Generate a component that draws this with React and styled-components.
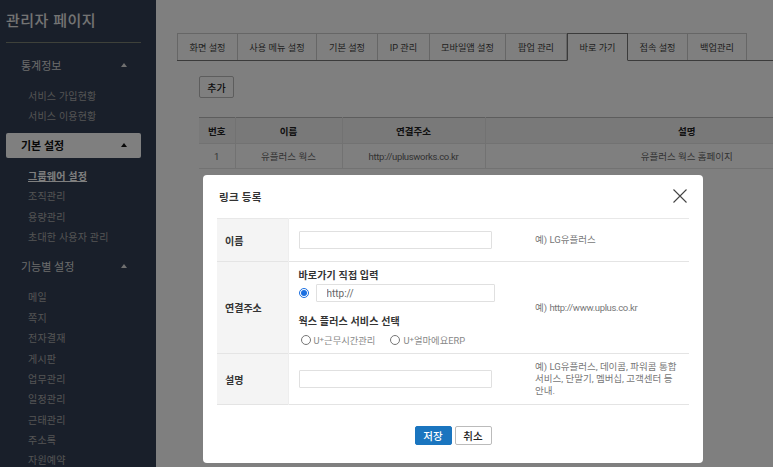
import React from 'react';
import styled, {createGlobalStyle} from 'styled-components';

const FONT = `Roboto, "Noto Sans CJK KR", "Noto Sans", "Liberation Sans", sans-serif`;

const tabs = ['화면 설정', '사용 메뉴 설정', '기본 설정', 'IP 관리', '모바일앱 설정', '팝업 관리', '바로 가기', '접속 설정', '백업관리'];
const tabWidths = [61, 79, 61, 52, 76, 61, 61, 60, 59];

const GlobalStyle = createGlobalStyle`
  html, body {
    margin: 0;
    padding: 0;
    height: 100%;
    overflow: hidden;
    font-family: ${FONT};
    background: #fff;
  }
  * {
    box-sizing: border-box;
  }
`;

const Page = styled.div`
  display: flex;
  width: 773px;
  height: 467px;
  overflow: hidden;
`;

const Sidebar = styled.aside`
  flex: 0 0 156px;
  height: 467px;
  overflow: hidden;
  padding: 10px 15px 0 6px;
  background: #333f55;
`;

const Logo = styled.h1`
  margin: 0 0 9px;
  height: 33px;
  border-bottom: 1px solid #7d8375;
  font-size: 15px;
  line-height: 23px;
  font-weight: 500;
  letter-spacing: 0.5px;
  color: #e8e8e8;
`;

const GroupHeader = styled.div`
  display: flex;
  align-items: center;
  justify-content: space-between;
  height: 25px;
  padding: 0 14px 0 15px;
  border-radius: 2px;
  font-size: 11px;
  font-weight: ${props => (props.$active ? 700 : 400)};
  color: ${props => (props.$active ? '#111' : '#d8d8d8')};
  background: ${props => (props.$active ? '#fff' : 'transparent')};
`;

const Caret = styled.span`
  width: 0;
  height: 0;
  border-left: 3.5px solid transparent;
  border-right: 3.5px solid transparent;
  border-bottom: 4px solid ${props => (props.$active ? '#111' : '#e0e0e0')};
`;

const SubList = styled.ul`
  list-style: none;
  margin: 0;
  padding: ${props => props.$top}px 0 ${props => props.$bottom}px 22px;
`;

const SubItem = styled.li`
  height: 20.4px;
  font-size: 10px;
  line-height: 20.4px;
  white-space: nowrap;
  letter-spacing: 0.2px;
  color: ${props => (props.$current ? '#fff' : '#a8a8a8')};
  font-weight: ${props => (props.$current ? 700 : 400)};
  text-decoration: ${props => (props.$current ? 'underline' : 'none')};
`;

const Main = styled.main`
  flex: 1;
  min-width: 0;
  padding: 33px 0 0 21px;
  overflow: hidden;
`;

const TabBar = styled.div`
  display: flex;
  height: 28px;
  border-bottom: 1px solid #777;
`;

const Tab = styled.div`
  display: flex;
  align-items: center;
  justify-content: center;
  height: ${props => (props.$active ? 28 : 27)}px;
  border: 1px solid ${props => (props.$active ? '#777' : '#ccc')};
  border-bottom: ${props => (props.$active ? '1px solid #fff' : '0')};
  border-left-width: ${props => (props.$first || props.$active ? 1 : 0)}px;
  font-size: 9.2px;
  white-space: nowrap;
  color: #444;
  background: #fff;
`;

const TabBody = styled.section`
  padding: 15px 0 0 22px;
`;

const AddButton = styled.button`
  display: block;
  width: 35px;
  height: 22px;
  padding: 0;
  border: 1px solid #bbb;
  border-radius: 2px;
  background: #fff;
  font-family: inherit;
  font-size: 10px;
  font-weight: 500;
  color: #222;
`;

const ListTable = styled.table`
  width: 689px;
  margin-top: 19px;
  table-layout: fixed;
  border-collapse: collapse;
  border-top: 1px solid #bbb;
  font-size: 9.5px;
`;

const ListHead = styled.th`
  height: 26px;
  padding: 0;
  font-weight: 700;
  color: #222;
  background: #f2f2f2;
  border: 1px solid #e4e4e4;
  border-width: 0 1px 1px 0;
  width: ${props => props.$w}px;
  &:last-child {
    border-right: 0;
  }
`;

const ListCell = styled.td`
  height: 25px;
  padding: 0;
  text-align: center;
  color: #666;
  border: 1px solid #e4e4e4;
  border-width: 0 1px 1px 0;
  &:last-child {
    border-right: 0;
  }
`;

const Url = styled.span`
  letter-spacing: -0.35px;
`;

const Backdrop = styled.div`
  position: fixed;
  inset: 0;
  z-index: 10;
  background: rgba(0, 0, 0, 0.5);
`;

const Modal = styled.div`
  position: absolute;
  left: 203px;
  top: 175px;
  width: 500px;
  height: 288px;
  padding: 0 14px;
  border-radius: 4px;
  background: #fff;
`;

const ModalHeader = styled.div`
  display: flex;
  align-items: center;
  justify-content: space-between;
  height: 43px;
  padding: 2px 2px 3px 2px;
`;

const ModalTitle = styled.h2`
  margin: 0;
  font-size: 10.5px;
  font-weight: 700;
  letter-spacing: 0.3px;
  color: #333;
`;

const CloseIcon = styled.svg`
  display: block;
  width: 14px;
  height: 14px;
  stroke: #444;
  stroke-width: 1.1;
  fill: none;
`;

const FormTable = styled.table`
  width: 472px;
  table-layout: fixed;
  border-collapse: collapse;
  border-top: 1px solid #e8e8e8;
`;

const FormRow = styled.tr`
  height: ${props => props.$h}px;
  border-bottom: 1px solid #e4e4e4;
`;

const FormLabel = styled.th`
  width: 71px;
  padding: 0 0 0 8px;
  text-align: left;
  font-size: 10px;
  font-weight: 700;
  color: #333;
  background: #f4f4f4;
  border-right: 1px solid #eee;
`;

const FormField = styled.td`
  width: 247px;
  padding: 0 0 0 10px;
  vertical-align: middle;
`;

const FormNote = styled.td`
  padding: 0 12px 0 0;
  font-size: 9.5px;
  line-height: 12px;
  word-break: keep-all;
  color: #777;
  vertical-align: middle;
`;

const TextInput = styled.input`
  display: block;
  width: ${props => props.$w}px;
  height: 17.5px;
  padding: 0 ${props => (props.$pad ? 10 : 0)}px;
  border: 1px solid #e0e0e0;
  border-radius: 1px;
  font-family: inherit;
  font-size: 10px;
  color: #666;
  outline: 0;
`;

const FieldTitle = styled.div`
  height: 15px;
  margin-top: ${props => props.$top || 0}px;
  font-size: 10px;
  line-height: 15px;
  font-weight: 700;
  letter-spacing: 0.15px;
  color: #333;
`;

const RadioRow = styled.div`
  display: flex;
  align-items: center;
  gap: ${props => props.$gap}px;
  margin-top: ${props => props.$top}px;
`;

const Radio = styled.input`
  width: 10px;
  height: 10px;
  margin: 0;
  flex: none;
  accent-color: #1a6fe0;
`;

const RadioLabel = styled.label`
  display: flex;
  align-items: center;
  gap: 3px;
  padding-left: 2px;
  font-size: 9.3px;
  color: #888;
  white-space: nowrap;
`;

const Plus = styled.sup`
  font-size: 8px;
  line-height: 0;
  vertical-align: 2px;
`;

const Actions = styled.div`
  display: flex;
  justify-content: center;
  gap: 3px;
  margin-top: 21px;
`;

const ActionButton = styled.button`
  width: 37px;
  height: 19px;
  padding: 0;
  border: 1px solid ${props => (props.$primary ? '#1a75bf' : '#bbb')};
  border-radius: 2px;
  font-family: inherit;
  font-size: 10.5px;
  font-weight: 500;
  color: ${props => (props.$primary ? '#fff' : '#222')};
  background: ${props => (props.$primary ? '#1a75bf' : '#fff')};
`;

const App = () => (
  <Page>
    <GlobalStyle />
    <Sidebar>
      <Logo>관리자 페이지</Logo>
      <GroupHeader>
        통계정보
        <Caret />
      </GroupHeader>
      <SubList $top={10} $bottom={5}>
        <SubItem>서비스 가입현황</SubItem>
        <SubItem>서비스 이용현황</SubItem>
      </SubList>
      <GroupHeader $active>
        기본 설정
        <Caret $active />
      </GroupHeader>
      <SubList $top={9} $bottom={5}>
        <SubItem $current>그룹웨어 설정</SubItem>
        <SubItem>조직관리</SubItem>
        <SubItem>용량관리</SubItem>
        <SubItem>초대한 사용자 관리</SubItem>
      </SubList>
      <GroupHeader>
        기능별 설정
        <Caret />
      </GroupHeader>
      <SubList $top={10} $bottom={0}>
        {['메일', '쪽지', '전자결재', '게시판', '업무관리', '일정관리', '근태관리', '주소록', '자원예약'].map(name => (
          <SubItem key={name}>{name}</SubItem>
        ))}
      </SubList>
    </Sidebar>
    <Main>
      <TabBar>
        {tabs.map((tab, i) => (
          <Tab key={tab} $first={i === 0} $active={tab === '바로 가기'} style={{width: tabWidths[i]}}>
            {tab}
          </Tab>
        ))}
      </TabBar>
      <TabBody>
        <AddButton>추가</AddButton>
        <ListTable>
          <thead>
            <tr>
              <ListHead $w={36}>번호</ListHead>
              <ListHead $w={107}>이름</ListHead>
              <ListHead $w={143}>연결주소</ListHead>
              <ListHead>설명</ListHead>
            </tr>
          </thead>
          <tbody>
            <tr>
              <ListCell>1</ListCell>
              <ListCell>유플러스 웍스</ListCell>
              <ListCell>
                <Url>http://uplusworks.co.kr</Url>
              </ListCell>
              <ListCell>유플러스 웍스 홈페이지</ListCell>
            </tr>
          </tbody>
        </ListTable>
      </TabBody>
    </Main>
    <Backdrop>
      <Modal>
        <ModalHeader>
          <ModalTitle>링크 등록</ModalTitle>
          <CloseIcon viewBox="0 0 14 14">
            <path d="M0.5 0.5 L13.5 13.5 M13.5 0.5 L0.5 13.5" />
          </CloseIcon>
        </ModalHeader>
        <FormTable>
          <tbody>
            <FormRow $h={43}>
              <FormLabel>이름</FormLabel>
              <FormField>
                <TextInput $w={193} />
              </FormField>
              <FormNote>예) LG유플러스</FormNote>
            </FormRow>
            <FormRow $h={92}>
              <FormLabel>연결주소</FormLabel>
              <FormField>
                <FieldTitle>바로가기 직접 입력</FieldTitle>
                <RadioRow $gap={7} $top={1}>
                  <Radio type="radio" name="link" defaultChecked />
                  <TextInput $w={179} $pad defaultValue="http://" />
                </RadioRow>
                <FieldTitle $top={12}>웍스 플러스 서비스 선택</FieldTitle>
                <RadioRow $gap={13} $top={4}>
                  <RadioLabel>
                    <Radio type="radio" name="link" />
                    <span>
                      U<Plus>+</Plus>근무시간관리
                    </span>
                  </RadioLabel>
                  <RadioLabel>
                    <Radio type="radio" name="link" />
                    <span>
                      U<Plus>+</Plus>얼마에요ERP
                    </span>
                  </RadioLabel>
                </RadioRow>
              </FormField>
              <FormNote>
                예) <Url>http://www.uplus.co.kr</Url>
              </FormNote>
            </FormRow>
            <FormRow $h={51}>
              <FormLabel>설명</FormLabel>
              <FormField>
                <TextInput $w={193} />
              </FormField>
              <FormNote>예) LG유플러스, 데이콤, 파워콤 통합 서비스, 단말기, 멤버십, 고객센터 등 안내.</FormNote>
            </FormRow>
          </tbody>
        </FormTable>
        <Actions>
          <ActionButton $primary>저장</ActionButton>
          <ActionButton>취소</ActionButton>
        </Actions>
      </Modal>
    </Backdrop>
  </Page>
);

export default App;
